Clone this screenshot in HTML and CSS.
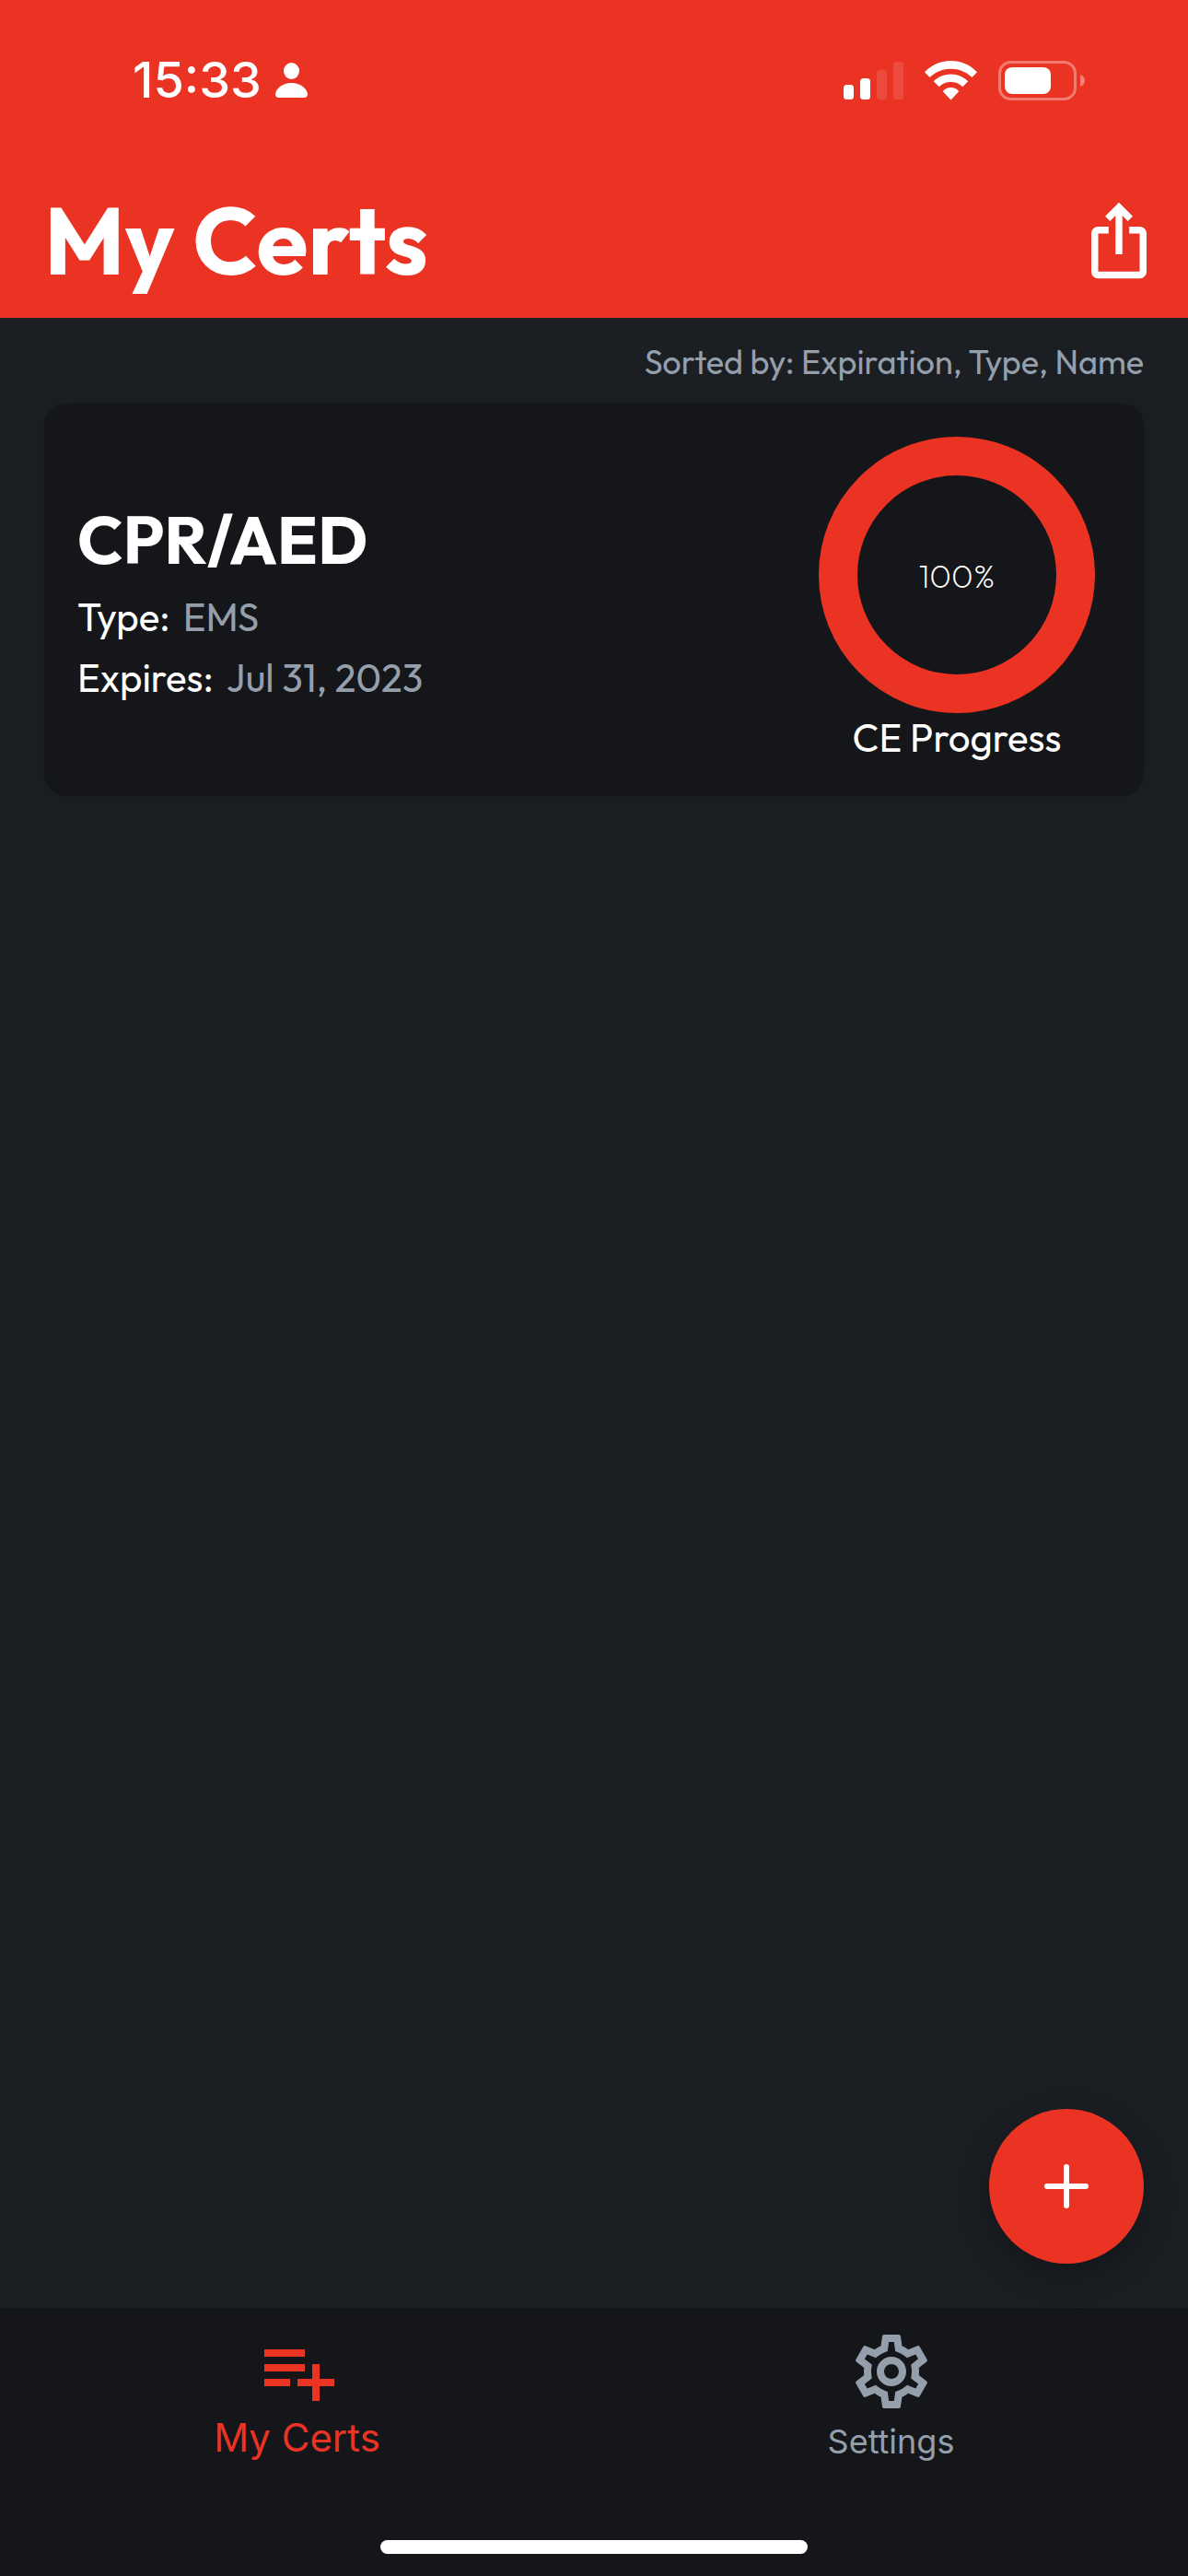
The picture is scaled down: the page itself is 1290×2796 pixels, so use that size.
FILE: index.html
```html
<!DOCTYPE html>
<html lang="en">
<head>
<meta charset="utf-8">
<meta name="viewport" content="width=device-width, initial-scale=1">
<title>My Certs</title>
<link rel="stylesheet" href="styles.css">
</head>
<body>
<header class="header">
  <div class="status">
    <div class="status-time">
      <span>15:33</span>
      <svg class="icon-person" viewBox="0 0 35 38" aria-hidden="true"><ellipse cx="17.500" cy="9" rx="8.500" ry="9"/><path d="M4 38C1.500 38 0 36.800 0 34.500 0 29 7 22 17.500 22S35 29 35 34.500C35 36.800 33.500 38 31 38z"/></svg>
    </div>
    <div class="status-icons">
      <svg class="icon-signal" viewBox="0 0 65 43" aria-hidden="true"><rect y="26" width="11" height="16" rx="3.500"/><rect x="18" y="19" width="11" height="23" rx="3.500"/><rect class="faint" x="36" y="10" width="11" height="32" rx="3.500"/><rect class="faint" x="54" y="1" width="11" height="41" rx="3.500"/></svg>
      <svg class="icon-wifi" viewBox="0 0 57 43" aria-hidden="true"><path d="M28.500 0C39.500 0 49.500 4.300 57 12.200L51.400 18C45.300 12 37.300 8.700 28.500 8.700S11.700 12 5.600 18L0 12.200C7.500 4.300 17.500 0 28.500 0z"/><path d="M28.500 14.500C35.700 14.500 42.200 17.300 47.200 22.300L41.300 28.200C37.900 24.900 33.500 23 28.500 23S19.100 24.900 15.700 28.200L9.800 22.300C14.800 17.300 21.300 14.500 28.500 14.500z"/><path d="M28.500 29C31.900 29 34.900 30.300 37.200 33.200L28.500 42.500 19.800 33.200C22.100 30.300 25.100 29 28.500 29z"/></svg>
      <svg class="icon-battery" viewBox="0 0 94 43" aria-hidden="true"><rect class="shell" x="1.500" y="1.500" width="82" height="40" rx="12"/><rect x="7" y="7" width="50" height="29" rx="8"/><path class="tip" d="M89 15c3 1.200 5 3.600 5 6.500s-2 5.300-5 6.500z"/></svg>
    </div>
  </div>
  <div class="title-bar">
    <h1 class="title">My Certs</h1>
    <button class="share" type="button" aria-label="Share">
      <svg viewBox="0 0 24 24" aria-hidden="true"><path d="M16 5l-1.420 1.420-1.590-1.590V16h-1.980V4.830L9.420 6.420 8 5l4-4 4 4zm4 5v11c0 1.100-.9 2-2 2H6c-1.110 0-2-.9-2-2V10c0-1.110.89-2 2-2h3v2H6v11h12V10h-3V8h3c1.100 0 2 .89 2 2z"/></svg>
    </button>
  </div>
</header>
<main class="content">
  <p class="sorted">Sorted by: Expiration, Type, Name</p>
  <article class="card">
    <div class="details">
      <h2 class="cert-name">CPR/AED</h2>
      <p class="row"><span>Type:</span><span class="muted">EMS</span></p>
      <p class="row"><span>Expires:</span><span class="muted">Jul 31, 2023</span></p>
    </div>
    <div class="progress">
      <div class="ring">100%</div>
      <p class="caption">CE Progress</p>
    </div>
  </article>
  <button class="add" type="button" aria-label="Add certification">
    <svg viewBox="0 0 48 48" aria-hidden="true"><path d="M24 3v42M3 24h42"/></svg>
  </button>
</main>
<footer class="footer">
  <nav class="tabs">
    <a class="tab tab-active" href="#certs">
      <svg viewBox="0 0 24 24" aria-hidden="true"><path d="M14 10H3v2h11v-2zm0-4H3v2h11V6zm4 8v-4h-2v4h-4v2h4v4h2v-4h4v-2h-4zM3 16h7v-2H3v2z"/></svg>
      <span>My Certs</span>
    </a>
    <a class="tab" href="#settings">
      <svg viewBox="0 0 24 24" aria-hidden="true"><path d="M19.430 12.980c.04-.32.07-.64.07-.98 0-.34-.03-.66-.07-.98l2.110-1.650c.19-.15.24-.42.12-.64l-2-3.460c-.09-.16-.26-.25-.44-.25-.06 0-.12.01-.17.03l-2.490 1c-.52-.4-1.080-.73-1.690-.98l-.38-2.650C14.460 2.180 14.250 2 14 2h-4c-.25 0-.46.18-.49.42l-.38 2.650c-.61.25-1.170.59-1.690.98l-2.490-1c-.06-.02-.12-.03-.18-.03-.17 0-.34.09-.43.25l-2 3.460c-.13.22-.07.49.12.64l2.110 1.650c-.04.32-.07.65-.07.98 0 .33.03.66.07.98l-2.110 1.650c-.19.15-.24.42-.12.64l2 3.460c.09.16.26.25.44.25.06 0 .12-.01.17-.03l2.490-1c.52.4 1.080.73 1.690.98l.38 2.650c.03.24.24.42.49.42h4c.25 0 .46-.18.49-.42l.38-2.650c.61-.25 1.170-.59 1.690-.98l2.490 1c.06.02.12.03.18.03.17 0 .34-.09.43-.25l2-3.460c.12-.22.07-.49-.12-.64l-2.110-1.650zm-1.980-1.710c.04.31.05.52.05.73 0 .21-.02.43-.05.73l-.14 1.130.89.7 1.080.84-.7 1.210-1.270-.51-1.040-.42-.9.68c-.43.32-.84.56-1.250.73l-1.060.43-.16 1.130-.2 1.350h-1.400l-.19-1.350-.16-1.130-1.060-.43c-.43-.18-.83-.41-1.230-.71l-.91-.7-1.060.43-1.270.51-.7-1.210 1.080-.84.89-.7-.14-1.130c-.03-.31-.05-.54-.05-.74s.02-.43.05-.73l.14-1.130-.89-.7-1.080-.84.7-1.210 1.270.51 1.040.42.9-.68c.43-.32.84-.56 1.250-.73l1.060-.43.16-1.130.2-1.350h1.390l.19 1.350.16 1.130 1.060.43c.43.18.83.41 1.230.71l.91.7 1.060-.43 1.270-.51.7 1.210-1.070.85-.89.7.14 1.130zM12 8c-2.210 0-4 1.790-4 4s1.790 4 4 4 4-1.790 4-4-1.790-4-4-4zm0 6c-1.100 0-2-.9-2-2s.9-2 2-2 2 .9 2 2-.9 2-2 2z"/></svg>
      <span>Settings</span>
    </a>
  </nav>
  <div class="home-indicator"></div>
</footer>
</body>
</html>
```
FILE: styles.css
```css
:root {
  --red: #eb3323;
  --page: #1b1f24;
  --surface: #14161a;
  --muted: #959fac;
}

* {
  box-sizing: border-box;
}

body {
  margin: 0;
  min-height: 100vh;
  display: flex;
  flex-direction: column;
  background: var(--page);
  color: #fff;
  font-family: Outfit, Lato, sans-serif;
}

h1, h2, p {
  margin: 0;
}

button {
  border: 0;
  padding: 0;
  color: inherit;
  font: inherit;
}

svg {
  display: block;
  fill: currentColor;
}

.header {
  background: var(--red);
}

.status {
  display: flex;
  justify-content: space-between;
  align-items: center;
  height: 174px;
  padding: 0 112px 0 144px;
}

.status-time {
  display: flex;
  align-items: center;
  gap: 15px;
  font: 500 54px/64px Inter, sans-serif;
}

.status-icons {
  display: flex;
  align-items: center;
  gap: 23px;
}

.icon-person {
  width: 35px;
  height: 38px;
}

.icon-signal {
  width: 65px;
  height: 43px;
}

.icon-wifi {
  width: 57px;
  height: 43px;
}

.icon-battery {
  width: 94px;
  height: 43px;
}

.faint {
  opacity: 0.12;
}

.shell {
  fill: none;
  stroke: currentColor;
  stroke-width: 3;
  opacity: 0.35;
}

.tip {
  opacity: 0.4;
}

.title-bar {
  display: flex;
  justify-content: space-between;
  align-items: center;
  height: 171px;
  padding: 3px 30px 0 48px;
}

.title {
  font-size: 102px;
  font-weight: 700;
  line-height: 128px;
}

.share {
  width: 90px;
  height: 90px;
  background: none;
}

.content {
  position: relative;
  flex: 1;
  padding: 24px 48px;
}

.sorted {
  color: var(--muted);
  font-size: 36px;
  line-height: 48px;
  text-align: right;
}

.card {
  display: flex;
  justify-content: space-between;
  align-items: center;
  margin-top: 21px;
  padding: 36px 53px 36px 36px;
  border-radius: 24px;
  background: var(--surface);
  font-size: 42px;
  box-shadow: 0 0 12px rgba(0, 0, 0, 0.1);
}

.details {
  padding-top: 8px;
}

.cert-name {
  margin-bottom: 6px;
  font-size: 72px;
  line-height: 90px;
}

.row {
  display: flex;
  gap: 14px;
  line-height: 66px;
}

.muted {
  color: var(--muted);
}

.progress {
  text-align: center;
}

.ring {
  display: flex;
  justify-content: center;
  align-items: center;
  width: 300px;
  height: 300px;
  border: 42px solid var(--red);
  border-radius: 50%;
  font-size: 36px;
  font-weight: 200;
}

.caption {
  line-height: 54px;
}

.add {
  position: absolute;
  right: 48px;
  bottom: 48px;
  display: grid;
  place-items: center;
  width: 168px;
  height: 168px;
  border-radius: 50%;
  background: var(--red);
  box-shadow: 0 12px 36px rgba(0, 0, 0, 0.35);
}

.add svg {
  width: 48px;
  height: 48px;
  stroke: currentColor;
  stroke-width: 6;
  stroke-linecap: round;
}

.footer {
  padding: 21px 0 24px;
  background: var(--surface);
  font-family: Inter, sans-serif;
}

.tabs {
  display: grid;
  grid-template-columns: 1fr 1fr;
  height: 231px;
}

.tab {
  display: flex;
  flex-direction: column;
  align-items: center;
  color: var(--muted);
  font-size: 36px;
  line-height: 56px;
  text-decoration: none;
}

.tab svg {
  width: 96px;
  height: 96px;
}

.tab-active {
  color: var(--red);
  font-size: 42px;
  line-height: 48px;
}

.home-indicator {
  width: 36%;
  height: 15px;
  margin: 0 auto;
  border-radius: 8px;
  background: #fff;
}
```
